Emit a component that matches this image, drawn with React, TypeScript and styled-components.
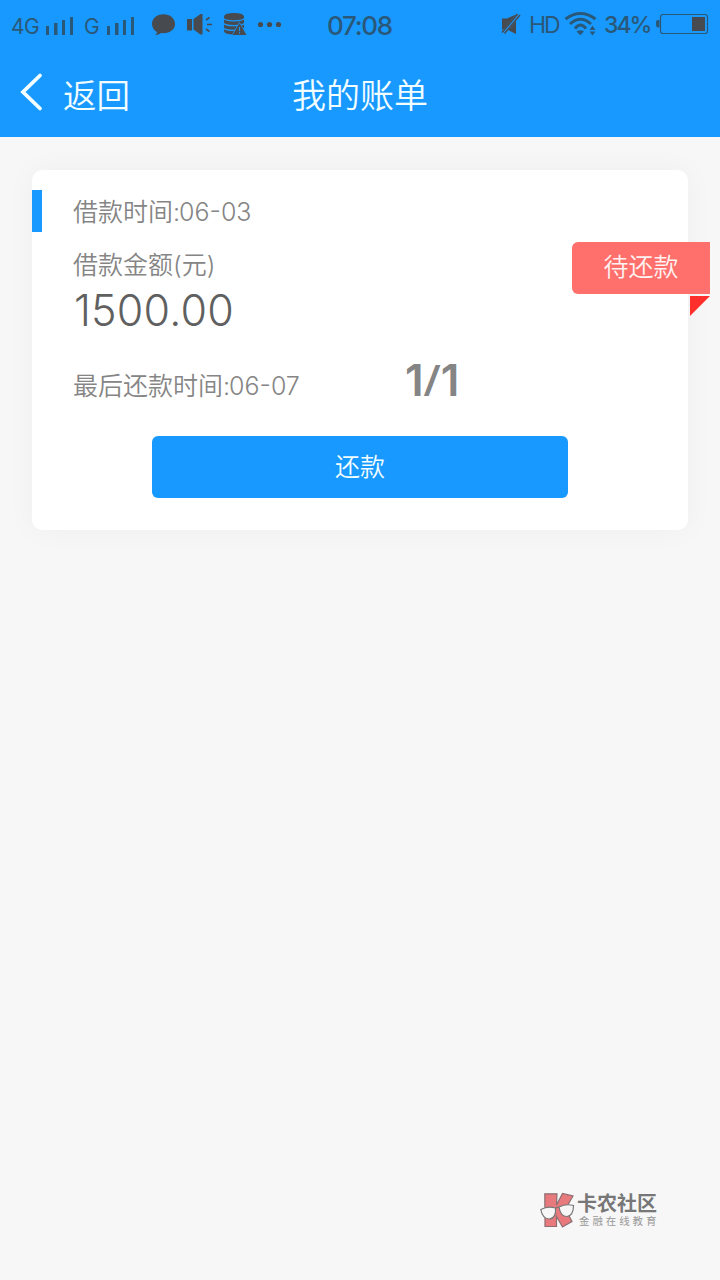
import React from 'react';
import styled, { createGlobalStyle } from 'styled-components';

const BLUE = '#1899ff';
const INK = '#2a5878';
const DARK = '#474a4f';

const GlobalStyle = createGlobalStyle`
  * { box-sizing: border-box; }
  body {
    margin: 0;
    background: #f7f7f7;
    font-family: Inter, "Noto Sans CJK SC", sans-serif;
    font-weight: 350;
  }
`;

const Screen = styled.div`
  width: 720px;
  height: 1280px;
  display: flex;
  flex-direction: column;
  background: #f7f7f7;
  overflow: hidden;
`;

const Header = styled.header`
  height: 137px;
  flex: none;
  background: ${BLUE};
`;

const StatusBar = styled.div`
  height: 50px;
  display: flex;
  align-items: center;
  color: ${INK};
`;

const Slot = styled.div<{ $width: number }>`
  width: ${(p) => p.$width}px;
  height: 50px;
  flex: none;
  svg { display: block; }
`;

const StatusText = styled.span<{ $width: number; $size: number; $weight?: number; $spacing?: number; $drop?: number }>`
  width: ${(p) => p.$width}px;
  flex: none;
  padding-top: ${(p) => p.$drop ?? 0}px;
  font-size: ${(p) => p.$size}px;
  font-weight: ${(p) => p.$weight ?? 400};
  letter-spacing: ${(p) => p.$spacing ?? 0}px;
  line-height: 50px;
  height: 50px;
  white-space: nowrap;
`;

const NavBar = styled.nav`
  height: 87px;
  padding-top: 5px;
  display: grid;
  grid-template-columns: 220px 280px 220px;
  align-items: center;
  color: #f2fdff;
  font-size: 33.5px;
  line-height: 48px;
`;

const Back = styled.div`
  display: flex;
  align-items: center;
  gap: 20px;
  padding-left: 18px;
  svg { margin-top: -8px; }
`;

const Title = styled.h1`
  margin: 0;
  font: inherit;
  font-size: 34px;
  text-align: center;
`;

const Content = styled.main`
  flex: 1;
  padding: 33px 32px 0;
`;

const Card = styled.section`
  position: relative;
  height: 360px;
  padding-top: 20px;
  display: flex;
  flex-direction: column;
  background: #fff;
  border-radius: 10px;
  box-shadow: 0 0 30px rgba(0, 0, 0, 0.04);
  color: #858585;
  font-size: 25px;
`;

const BorrowDate = styled.div`
  height: 42px;
  padding-left: 31px;
  border-left: 10px solid ${BLUE};
  line-height: 44px;
`;

const DateDigits = styled.span`
  margin-left: -1px;
  font-size: 25px;
`;

const Dash = styled.span`
  vertical-align: 2px;
  line-height: 0;
`;

const AmountLabel = styled.div`
  padding: 13px 0 0 41px;
  line-height: 40px;
`;

const Amount = styled.div`
  margin-top: -1px;
  padding-left: 42px;
  font-size: 43px;
  line-height: 52px;
  letter-spacing: 0.2px;
  color: #606060;
`;

const DueRow = styled.div`
  height: 56px;
  margin-top: 16px;
  padding-left: 41px;
  display: flex;
`;

const DueDate = styled.span`
  width: 332px;
  line-height: 68px;
`;

const Term = styled.strong`
  font-size: 44px;
  font-weight: 600;
  line-height: 54px;
`;

const Slash = styled.span`
  font-family: "Open Sans", sans-serif;
`;

const PayButton = styled.button`
  width: 416px;
  height: 62px;
  margin: 28px auto 0;
  padding: 0 0 4px;
  border: 0;
  border-radius: 6px;
  background: ${BLUE};
  color: #f2fdff;
  font: inherit;
`;

const Ribbon = styled.div`
  position: absolute;
  top: 72px;
  right: -22px;
  width: 138px;
  height: 52px;
  border-radius: 6px 0 0 6px;
  background: #ff706c;
  color: #fff2f0;
  line-height: 50px;
  text-align: center;
  &::after {
    content: '';
    position: absolute;
    top: 54px;
    right: 0;
    border-top: 20px solid #ff302c;
    border-right: 20px solid transparent;
    width: 0;
  }
`;

const Watermark = styled.footer`
  display: flex;
  gap: 2px;
  width: 184px;
  height: 94px;
  flex: none;
  align-self: flex-end;
  padding: 5px 0 0 4px;
`;

const Brand = styled.div`
  padding-top: 2px;
  color: #777;
  font-size: 20px;
  font-weight: 700;
  line-height: 23px;
  white-space: nowrap;
`;

const Slogan = styled.div`
  color: #999;
  font-size: 10.5px;
  font-weight: 400;
  letter-spacing: 2.9px;
  line-height: 11px;
  margin-left: 2px;
  white-space: nowrap;
`;

const Signal = () => (
  <svg width="30" height="50" fill={INK}>
    <path d="M1 26h3v9H1zM9 23h3.500v12H9zM17 20h3v15h-3zM25 17h3v18h-3z" />
  </svg>
);

const Notices = () => (
  <svg width="140" height="50" viewBox="145 0 140 50" fill={DARK}>
    <path d="M163.500 14.300C157 14.300 152 18.500 152 24c0 3.600 2 6.500 5 8.100-.2 1.300-.8 2.300-1.500 3.200 2.700-.3 4.400-1.200 5.600-2.200 8.200.8 13.900-3.400 13.900-9.100 0-5.500-5-9.700-11.500-9.700z" />
    <path d="M187 19h5v11.500h-5zM193.500 19l7-5h2v20.500h-2l-7-5z" />
    <path d="M206 20l3.500-2.500M207 24.500h5M206 29l3.500 2.500" fill="none" stroke={DARK} strokeWidth="1.600" />
    <path d="M224 16.500c0-4.600 20-4.600 20 0V31c0 4.800-20 4.800-20 0z" />
    <path d="M223 17.800c2 4 20 4 22 0M223 22.600c2 4 20 4 22 0M223 27.400c2 4 20 4 22 0" fill="none" stroke={BLUE} strokeWidth="1.300" />
    <path d="M239.500 23l7 12h-14z" stroke={BLUE} strokeWidth="1.200" paintOrder="stroke" />
    <path d="M239.500 27v4.200M239.500 32.300v1.500" stroke={BLUE} strokeWidth="1" />
    <circle cx="260.500" cy="24.500" r="2.600" />
    <circle cx="269.500" cy="24.500" r="2.600" />
    <circle cx="278.500" cy="24.500" r="2.600" />
  </svg>
);

const Muted = () => (
  <svg width="28" height="50" viewBox="500 0 28 50">
    <path d="M502 18.500h5l9-4v19.500l-9-4.500h-5z" fill={DARK} />
    <path d="M502.500 34L519.500 13.500" stroke={BLUE} strokeWidth="4" />
    <path d="M502 32.500L517.500 14" stroke={DARK} strokeWidth="1.700" />
    <path d="M504.500 33.500L520 15" stroke={DARK} strokeWidth="1.400" />
  </svg>
);

const Wifi = () => (
  <svg width="40" height="50" viewBox="564 0 40 50" fill="none" stroke={INK} strokeWidth="3">
    <path d="M565.500 19Q580.500 8 595.500 19M570 24Q580.500 14.500 591 24M575 28.700Q580.500 21.500 586 28.700" />
    <path d="M576.500 31.500Q580.500 28.800 584 31.500L580.300 35.300z" fill={INK} stroke="none" />
    <path d="M592.500 25.500l3 4.500h-6zM592.500 35.500l3-4h-6z" fill={INK} stroke="none" />
  </svg>
);

const Battery = () => (
  <svg width="56" height="50" viewBox="655 0 56 50">
    <path d="M659.500 20h-1.500q-2 0-2 2v3q0 2.500 2 2.500h1.500z" fill={INK} />
    <rect x="660.500" y="14.500" width="47" height="19" rx="2.500" fill="none" stroke={INK} strokeWidth="1.200" />
    <rect x="692" y="17" width="13" height="14" fill={DARK} />
  </svg>
);

const Chevron = () => (
  <svg width="25" height="42" fill="none" stroke="#f2fdff" strokeWidth="3.800" strokeLinecap="round" strokeLinejoin="miter">
    <path d="M22 4.500L5 21L22 37.500" />
  </svg>
);

const BrandLogo = () => (
  <svg width="35" height="38" viewBox="0 0 35 38">
    <path d="M4.800 2.800H17L16.500 14 22.500 2.500 33 5 25.500 18 32 30.500 22.500 36 16.500 25.500V35.500H5z" fill="#e8797d" stroke="#8d6f72" strokeWidth="1.200" />
    <g fill="#f7f7f7" stroke="#777" strokeWidth="1.200">
      <path d="M.8 18.500Q8 14.500 15.500 17 16.500 27 9.500 28 2.500 28 .8 18.500z" />
      <path d="M19 16Q26 12.500 33.500 14.500 33.500 24.500 27 25.500 20.500 25.500 19 16z" />
      <path d="M15.500 17.500q2-2 3.500-1" fill="none" />
    </g>
  </svg>
);

export default function App() {
  return (
    <>
      <GlobalStyle />
      <Screen>
        <Header>
          <StatusBar>
            <Slot $width={11} />
            <StatusText $width={34} $size={21} $spacing={-0.5} $drop={2}>4G</StatusText>
            <Slot $width={39}><Signal /></Slot>
            <StatusText $width={22} $size={21} $drop={2}>G</StatusText>
            <Slot $width={39}><Signal /></Slot>
            <Slot $width={182}><Notices /></Slot>
            <StatusText $width={173} $size={26} $weight={450} $spacing={-1.3} $drop={1}>07:08</StatusText>
            <Slot $width={29}><Muted /></Slot>
            <StatusText $width={35} $size={23} $spacing={-2.2}>HD</StatusText>
            <Slot $width={40}><Wifi /></Slot>
            <StatusText $width={51} $size={23} $weight={450} $spacing={-2}>34%</StatusText>
            <Slot $width={56}><Battery /></Slot>
          </StatusBar>
          <NavBar>
            <Back><Chevron />返回</Back>
            <Title>我的账单</Title>
          </NavBar>
        </Header>
        <Content>
          <Card>
            <BorrowDate>借款时间:<DateDigits>06<Dash>-</Dash>03</DateDigits></BorrowDate>
            <AmountLabel>借款金额(元)</AmountLabel>
            <Amount>1500.00</Amount>
            <DueRow>
              <DueDate>最后还款时间:<DateDigits>06<Dash>-</Dash>07</DateDigits></DueDate>
              <Term>1<Slash>/</Slash>1</Term>
            </DueRow>
            <PayButton>还款</PayButton>
            <Ribbon>待还款</Ribbon>
          </Card>
        </Content>
        <Watermark>
          <BrandLogo />
          <div>
            <Brand>卡农社区</Brand>
            <Slogan>金融在线教育</Slogan>
          </div>
        </Watermark>
      </Screen>
    </>
  );
}
